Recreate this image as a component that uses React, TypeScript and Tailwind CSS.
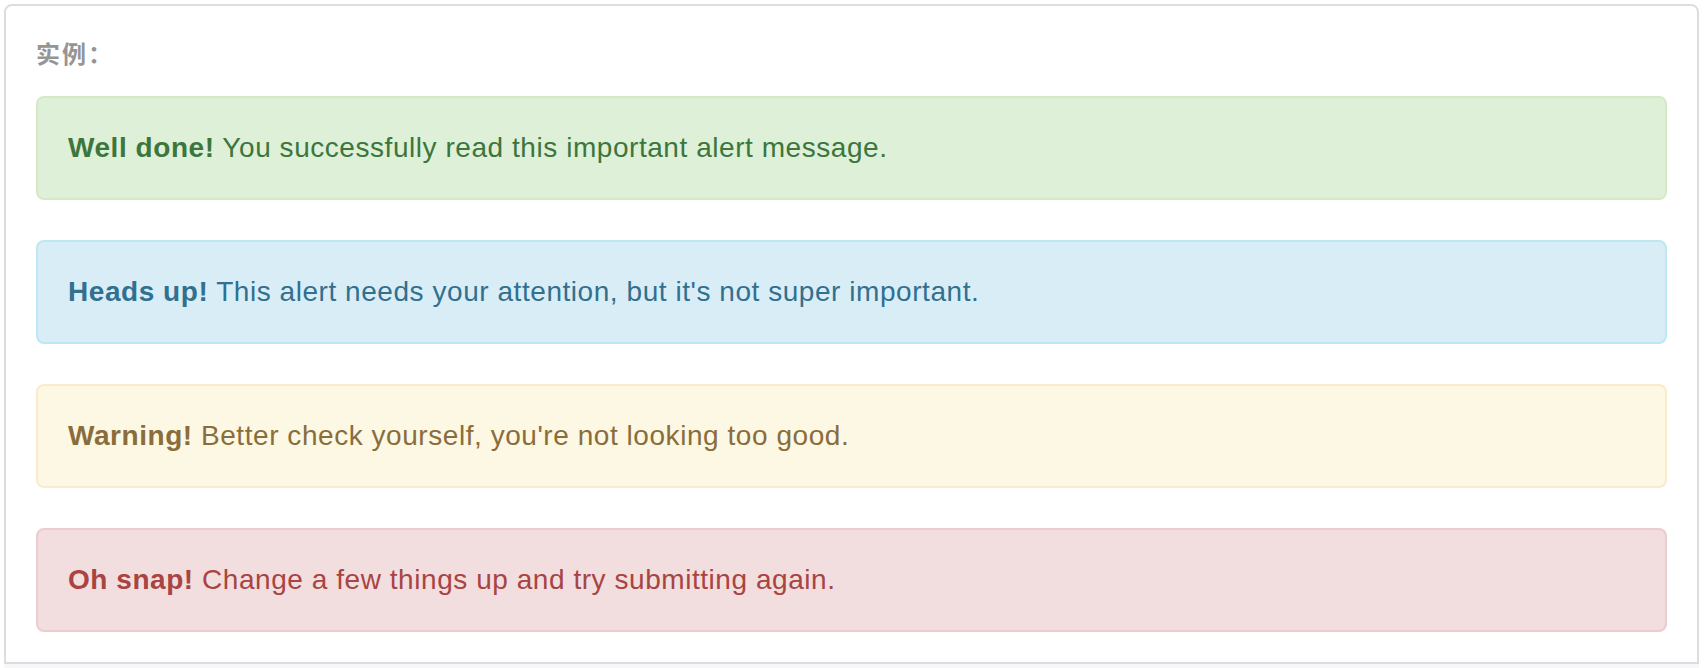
import React from "react";

const alerts = [
  {
    strong: "Well done!",
    text: " You successfully read this important alert message.",
    cls: "bg-[#dff0d8] border-[#d6e9c6] text-[#3c763d]",
  },
  {
    strong: "Heads up!",
    text: " This alert needs your attention, but it's not super important.",
    cls: "bg-[#d9edf7] border-[#bce8f1] text-[#31708f]",
  },
  {
    strong: "Warning!",
    text: " Better check yourself, you're not looking too good.",
    cls: "bg-[#fcf8e3] border-[#faebcc] text-[#8a6d3b]",
  },
  {
    strong: "Oh snap!",
    text: " Change a few things up and try submitting again.",
    cls: "bg-[#f2dede] border-[#ebccd1] text-[#a94442]",
  },
];

export default function App() {
  return (
    <div
      className="bg-white w-[1704px] h-[668px] overflow-hidden pt-[4px]"
      style={{ fontFamily: '"Liberation Sans", Arial, "Noto Sans CJK SC", sans-serif' }}
    >
      <div className="relative ml-[4px] mr-[5px] border-2 border-[#ddd] rounded-t-[8px] pt-[90px] px-[30px] pb-[30px] bg-white">
        <div
          className="absolute top-[30px] left-[30px] text-[24px] leading-[34px] font-bold text-[#959595] tracking-[2px]"
          style={{ fontFamily: '"Noto Sans CJK SC", "Liberation Sans", sans-serif' }}
        >
          实例：
        </div>
        <div className="flex flex-col gap-[40px]">
          {alerts.map((a) => (
            <div
              key={a.strong}
              className={`border-2 rounded-[8px] p-[30px] text-[28px] leading-[40px] tracking-[0.55px] ${a.cls}`}
            >
              <strong className="font-bold">{a.strong}</strong>
              {a.text}
            </div>
          ))}
        </div>
      </div>
      <div className="ml-[4px] mr-[5px] h-[20px] bg-[#f7f7f9]" />
    </div>
  );
}
